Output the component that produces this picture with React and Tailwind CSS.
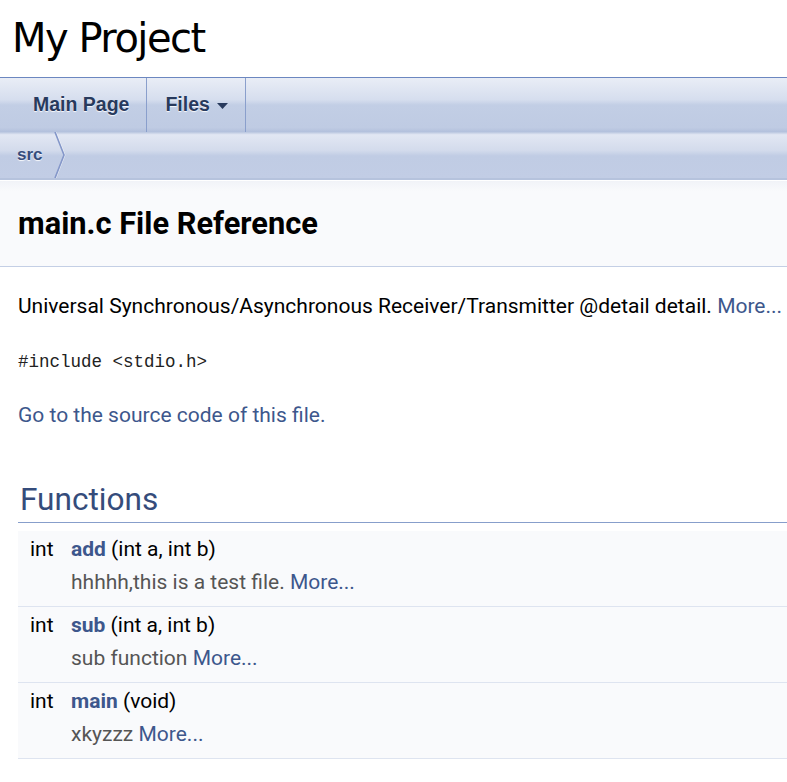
import React from 'react';

const rows = [
  { type: 'int', name: 'add', args: '(int a, int b)', brief: 'hhhhh,this is a test file.' },
  { type: 'int', name: 'sub', args: '(int a, int b)', brief: 'sub function' },
  { type: 'int', name: 'main', args: '(void)', brief: 'xkyzzz' },
];

const navShadow = { textShadow: '0px 1px 1px rgba(255,255,255,0.9)' };

const App = () => {
  return (
    <div className="w-[787px] min-h-[782px] overflow-hidden bg-white text-black" style={{ fontFamily: 'Roboto, "Liberation Sans", sans-serif' }}>
      {/* Project title */}
      <div className="h-[77px] pl-[12px] pt-[14px]">
        <div
          className="text-[40px] leading-[48px] tracking-[-1.5px] text-black"
          style={{ fontFamily: '"DejaVu Sans", "Liberation Sans", sans-serif' }}
        >
          My Project
        </div>
      </div>

      {/* Main nav */}
      <div
        className="flex h-[55px] border-t border-[#6C87C0] bg-[linear-gradient(to_bottom,#e9edf6_0%,#d6deee_40%,#c2cee5_50%,#bfcbe3_92%,#b2c0dc_100%)]"
        style={{ fontFamily: '"Liberation Sans", Arial, sans-serif' }}
      >
        <div className="flex items-center border-r border-[#8A9FCC] pl-[33px] pr-[17px] text-[19.5px] font-bold text-[#283A5D]" style={navShadow}>
          Main Page
        </div>
        <div className="flex items-center gap-[7px] border-r border-[#8A9FCC] pl-[18px] pr-[17px] text-[19.5px] font-bold text-[#283A5D]" style={navShadow}>
          Files
          <svg width="11" height="6" viewBox="0 0 11 6" className="mt-[1px]">
            <polygon points="0,0 11,0 5.5,6" fill="#283A5D" />
          </svg>
        </div>
      </div>

      {/* Breadcrumb */}
      <div
        className="flex h-[48px] items-stretch border-b-2 border-[#b6c3dd] bg-[linear-gradient(to_bottom,#b8c5df_0%,#e2e7f3_6%,#d3dbec_40%,#c0cce4_52%,#c2cde5_100%)]"
        style={{ fontFamily: '"Liberation Sans", Arial, sans-serif' }}
      >
        <div className="flex items-center pl-[17px] pr-[10px] text-[17px] font-bold text-[#364D7C]" style={navShadow}>
          src
        </div>
        <svg width="14" height="46" viewBox="0 0 14 46" className="self-center">
          <polyline points="2,0 11,23 2,46" fill="none" stroke="#ffffff" strokeOpacity="0.6" strokeWidth="1" transform="translate(1,0)" />
          <polyline points="2,0 11,23 2,46" fill="none" stroke="#8497C9" strokeWidth="1.6" />
        </svg>
      </div>

      {/* Page header */}
      <div className="flex h-[87px] items-center border-t border-white border-b border-b-[#C4CFE5] bg-[linear-gradient(to_bottom,#f1f3f8_0%,#f9fafc_12%,#f9fafc_100%)] pl-[18px]">
        <h1 className="text-[30.8px] font-bold leading-[36px] text-black">main.c File Reference</h1>
      </div>

      {/* Contents */}
      <div className="pl-[18px]">
        <p className="mt-[25px] whitespace-nowrap text-[21px] leading-[28px]">
          Universal Synchronous/Asynchronous Receiver/Transmitter @detail detail.{' '}
          <a className="text-[#3D578C]">More...</a>
        </p>

        <div
          className="mt-[28px] text-[17.5px] leading-[28px] text-[#222]"
          style={{ fontFamily: '"Liberation Mono", "Courier New", monospace' }}
        >
          #include &lt;stdio.h&gt;
        </div>

        <p className="mt-[25px] text-[21px] leading-[28px] text-[#3D578C]">Go to the source code of this file.</p>

        <h2 className="mt-[53px] border-b border-[#879ECB] pb-[4px] pl-[2px] text-[31.6px] font-normal leading-[36px] text-[#354C7B]">
          Functions
        </h2>

        <div className="mt-[8px]">
          {rows.map((r) => (
            <div key={r.name} className="border-b border-[#DEE4F0] bg-[#F9FAFC] pb-[10px] pt-[4px] text-[21px] leading-[28px]">
              <div className="flex">
                <div className="w-[53px] pl-[12px]">{r.type}</div>
                <div>
                  <a className="font-bold text-[#3D578C]">{r.name}</a> {r.args}
                </div>
              </div>
              <div className="mt-[5px] pl-[53px] text-[#555]">
                {r.brief} <a className="text-[#3D578C]">More...</a>
              </div>
            </div>
          ))}
        </div>
      </div>
    </div>
  );
};

export default App;
